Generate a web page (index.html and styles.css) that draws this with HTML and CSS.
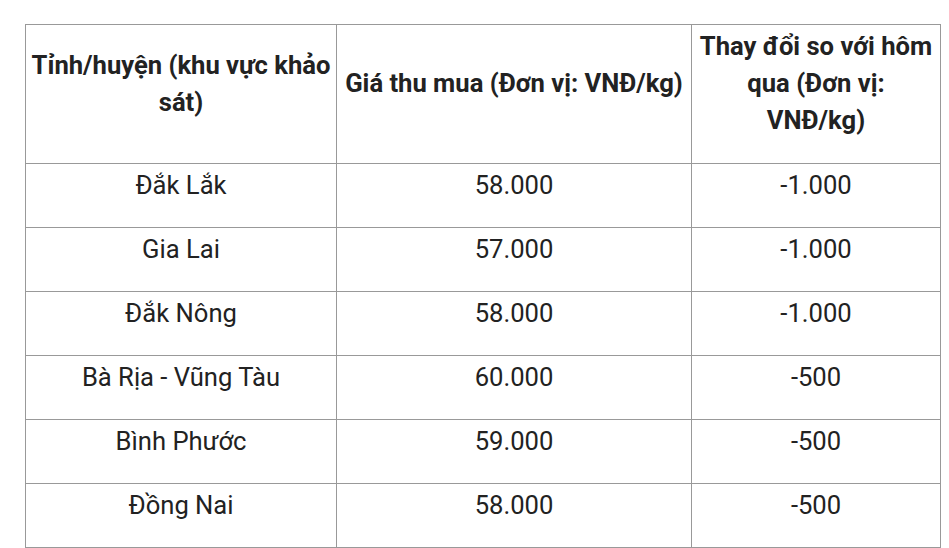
FILE: index.html
```html
<!DOCTYPE html>
<html lang="vi">
<head>
<meta charset="utf-8">
<title>Giá thu mua</title>
<link rel="stylesheet" href="styles.css">
</head>
<body>
<table class="price-table">
  <colgroup>
    <col class="col-region">
    <col class="col-price">
    <col class="col-change">
  </colgroup>
  <thead>
    <tr>
      <th><p>Tỉnh/huyện (khu vực khảo sát)</p></th>
      <th><p>Giá thu mua (Đơn vị: VNĐ/kg)</p></th>
      <th class="th-change"><p>Thay đổi so với hôm qua (Đơn vị: VNĐ/kg)</p></th>
    </tr>
  </thead>
  <tbody>
    <tr><td><p>Đắk Lắk</p></td><td><p>58.000</p></td><td><p>-1.000</p></td></tr>
    <tr><td><p>Gia Lai</p></td><td><p>57.000</p></td><td><p>-1.000</p></td></tr>
    <tr><td><p>Đắk Nông</p></td><td><p>58.000</p></td><td><p>-1.000</p></td></tr>
    <tr><td><p>Bà Rịa - Vũng Tàu</p></td><td><p>60.000</p></td><td><p>-500</p></td></tr>
    <tr><td><p>Bình Phước</p></td><td><p>59.000</p></td><td><p>-500</p></td></tr>
    <tr><td><p>Đồng Nai</p></td><td><p>58.000</p></td><td><p>-500</p></td></tr>
  </tbody>
</table>
</body>
</html>
```

FILE: styles.css
```css
html, body {
  margin: 0;
  padding: 0;
  background: #ffffff;
}

body {
  font-family: Roboto, "Liberation Sans", sans-serif;
  color: #222222;
  font-size: 25.6px;
  line-height: 37px;
}

.price-table {
  margin: 24px 0 0 25px;
  border-collapse: collapse;
  table-layout: fixed;
  width: 915px;
}

.col-region { width: 311px; }
.col-price { width: 355px; }
.col-change { width: 249px; }

.price-table th,
.price-table td {
  border: 1px solid #999999;
  padding: 3px 5px;
  text-align: center;
  vertical-align: middle;
}

.price-table th {
  font-weight: 700;
  padding-bottom: 4px;
}

.price-table th.th-change {
  padding-left: 7px;
  padding-right: 7px;
}

.price-table td {
  font-weight: 400;
}

.price-table p {
  margin: 0 0 20px;
}
```
